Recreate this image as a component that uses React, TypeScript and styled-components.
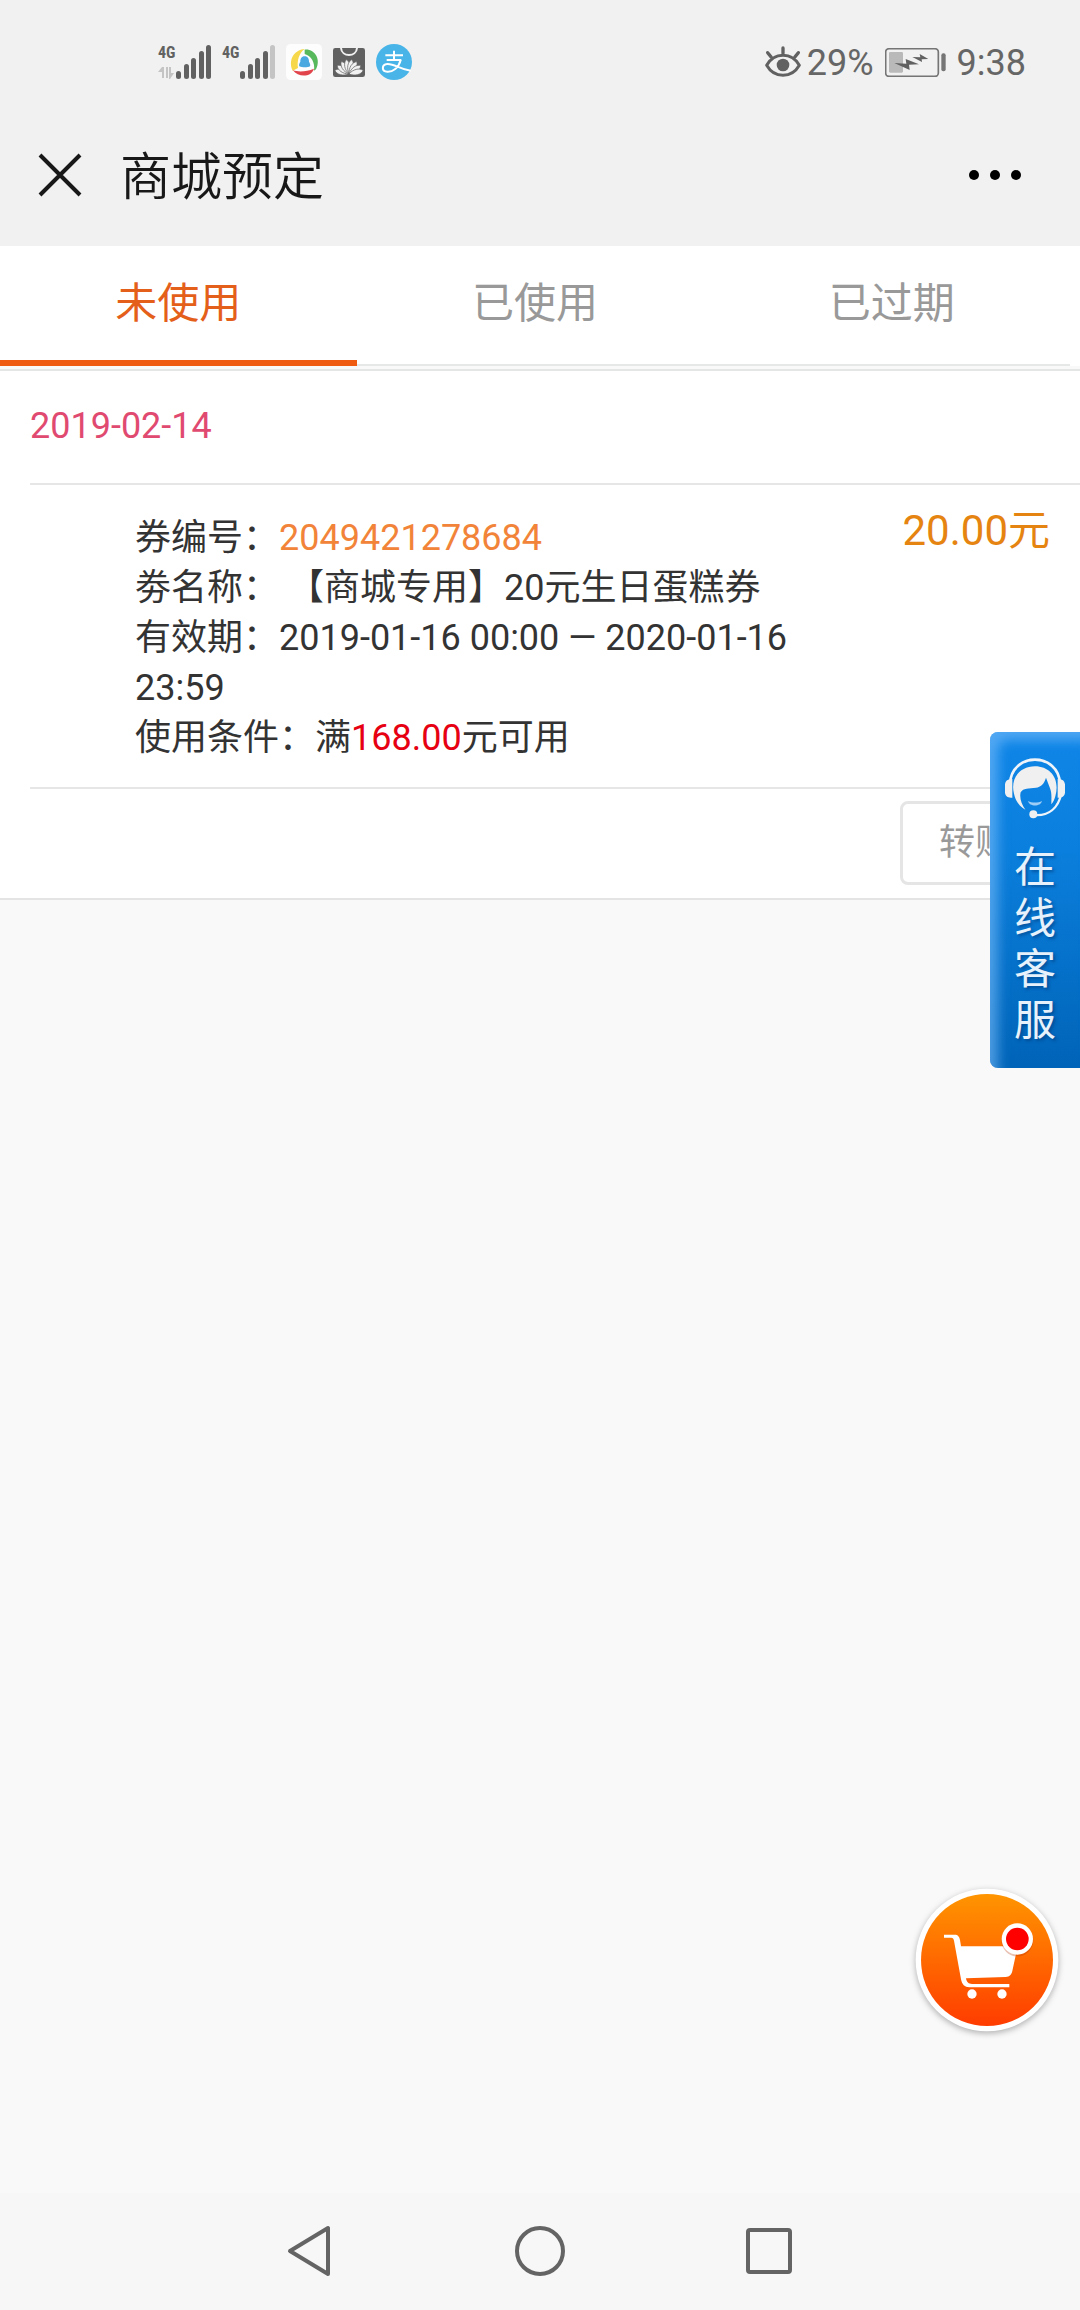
import React, { useState } from "react";
import styled, { createGlobalStyle } from "styled-components";

const GlobalStyle = createGlobalStyle`
  *, *::before, *::after { box-sizing: border-box; }
  body {
    margin: 0;
    background: #f9f9f9;
    color: #333;
    font-family: Roboto, "Noto Sans CJK SC", sans-serif;
    font-size: 36px;
    line-height: 50px;
  }
  button {
    margin: 0;
    padding: 0;
    border: 0;
    background: none;
    color: inherit;
    font: inherit;
    cursor: pointer;
  }
  svg { display: block; flex: none; }
`;

const Screen = styled.div`
  position: relative;
  display: flex;
  flex-direction: column;
  min-height: 100vh;
`;

const TopArea = styled.header`
  background: #f1f1f1;
`;

const StatusBar = styled.div`
  display: flex;
  align-items: center;
  justify-content: space-between;
  height: 106px;
  padding: 18px 54px 0 158px;
  color: #666;
`;

const StatusGroup = styled.div<{ $gap: number }>`
  display: flex;
  align-items: center;
  gap: ${(p) => p.$gap}px;
`;

const StatusText = styled.span`
  padding-top: 2px;
`;

const SignalBox = styled.div`
  display: grid;
  width: 53px;
  height: 34px;
  & > * { grid-area: 1 / 1; }
`;

const SignalLabel = styled.span`
  color: #616161;
  font-family: "Roboto Condensed", Roboto, sans-serif;
  font-size: 16px;
  font-weight: 700;
  line-height: 16px;
`;

const TitleBar = styled.div`
  display: flex;
  align-items: center;
  height: 140px;
  padding: 0 58px 2px 38px;
`;

const Title = styled.h1`
  flex: 1;
  margin: 0 0 0 38px;
  padding-top: 6px;
  color: #181818;
  font-size: 51px;
  font-weight: 350;
  line-height: 72px;
`;

const Tabs = styled.div`
  display: flex;
  padding-right: 10px;
  background: #fff;
`;

const Tab = styled.button<{ $active: boolean }>`
  flex: 1;
  height: 120px;
  padding-top: 2px;
  padding-bottom: ${(p) => (p.$active ? 0 : 4)}px;
  border-bottom: ${(p) => (p.$active ? "6px solid #ef5b10" : "2px solid #e6e8e8")};
  color: ${(p) => (p.$active ? "#e4601a" : "#999")};
  font-size: 42px;
`;

const List = styled.main`
  margin-top: 3px;
  padding-left: 30px;
  border-top: 2px solid #e4e6e6;
  border-bottom: 2px solid #e4e4e4;
  background: #fff;
`;

const DateRow = styled.div`
  padding: 30px 0 32px;
  border-bottom: 2px solid #e6e6e6;
  color: #e14a70;
`;

const Coupon = styled.section`
  display: flex;
  align-items: flex-start;
  gap: 30px;
  padding: 21px 30px 24px 105px;
  border-bottom: 2px solid #e6e6e6;
`;

const Info = styled.div`
  flex: 1;
  padding-top: 7px;
`;

const Line = styled.p`
  margin: 0;
`;

const Code = styled.span`
  color: #f2843a;
`;

const Amount = styled.span`
  color: #e60012;
`;

const Price = styled.strong`
  color: #e58410;
  font-size: 42px;
  font-weight: 400;
`;

const Actions = styled.div`
  display: flex;
  justify-content: flex-end;
  padding: 12px 30px 13px;
`;

const OutlineButton = styled.button`
  height: 84px;
  padding: 0 36px;
  border: 3px solid #e5e5e5;
  border-radius: 8px;
  color: #999;
`;

const Service = styled.button`
  position: absolute;
  top: 732px;
  right: 0;
  display: flex;
  flex-direction: column;
  align-items: center;
  gap: 21px;
  width: 90px;
  height: 336px;
  padding-top: 25px;
  border-radius: 8px 0 0 8px;
  background: linear-gradient(#0f86e8, #0b7fdd 35%, #0064b8);
  box-shadow: inset 10px 10px 12px -2px rgba(125, 190, 250, 0.6);
  color: #e6f1fb;
`;

const ServiceLabel = styled.span`
  width: 42px;
  font-size: 42px;
  line-height: 51px;
  word-break: break-all;
  text-shadow: 2px 2px 3px rgba(0, 50, 110, 0.5);
`;

const Cart = styled.button`
  position: absolute;
  right: 20px;
  bottom: 277px;
  border-radius: 50%;
  filter: drop-shadow(0 2px 3px rgba(0, 0, 0, 0.3));
`;

const NavBar = styled.nav`
  display: flex;
  align-items: center;
  justify-content: center;
  gap: 179px;
  height: 117px;
  margin-top: auto;
  padding-bottom: 2px;
  background: #f7f7f7;
`;

const BARS = [
  [18, 26],
  [26, 19],
  [33, 13],
  [41, 6],
  [48, 0],
];

function Signal({ full }: { full: boolean }) {
  return (
    <SignalBox>
      <SignalLabel>4G</SignalLabel>
      <svg width="53" height="34" viewBox="0 0 53 34" aria-hidden="true">
        {BARS.map(([x, y], i) => (
          <rect key={x} x={x} y={y} width="5" height={34 - y} rx="2.5" fill={i === 4 && !full ? "#c4c4c4" : "#616161"} />
        ))}
        {full && (
          <path d="M0 27l4-5h2v11H4v-6zM8 22h2v11H8zM11 22h2v6h3l-4 6h-1z" fill="#c4c4c4" />
        )}
      </svg>
    </SignalBox>
  );
}

function BrowserIcon() {
  return (
    <svg width="36" height="36" viewBox="0 0 108 108" aria-hidden="true">
      <rect width="108" height="108" rx="14" fill="#fdfdfd" />
      <path d="M20 80C6 50 22 18 56 15 40 26 32 50 36 72z" fill="#f6d84a" />
      <path d="M56 17C86 14 106 46 90 76L84 80C88 56 76 36 56 30z" fill="#58b85c" />
      <path d="M84 74C76 100 38 102 20 78 40 86 62 82 84 74z" fill="#e2444c" />
      <path d="M56 37c-10 0-13 8-13 16-3 5-5 10-3 14 8 4 26 4 32 0 2-4 0-9-3-14 0-8-3-16-13-16z" fill="#4aa8e0" />
    </svg>
  );
}

function StoreIcon() {
  const petals = [-76, -54, -32, -11, 11, 32, 54, 76];
  return (
    <svg width="32" height="29" viewBox="0 0 96 87" aria-hidden="true">
      <rect width="96" height="87" rx="7" fill="#616161" />
      <path d="M24 0c2 28 46 28 48 0" fill="none" stroke="#f1f1f1" strokeWidth="6" />
      {petals.map((a) => (
        <path
          key={a}
          d="M48 78c-11-16-11-34 0-44 11 10 11 28 0 44z"
          fill="#f1f1f1"
          stroke="#616161"
          strokeWidth="2"
          transform={`rotate(${a} 48 78)`}
        />
      ))}
    </svg>
  );
}

function PayIcon() {
  return (
    <svg width="36" height="36" viewBox="0 0 108 108" aria-hidden="true">
      <circle cx="54" cy="54" r="54" fill="#48b4e8" />
      <g fill="none" stroke="#fff" strokeWidth="6">
        <path d="M28 34h53M54 20v28M32 48h44" />
        <path d="M74 48C68 72 50 84 34 83 16 82 16 62 34 60c22-1 36 16 70 20" />
      </g>
    </svg>
  );
}

function EyeIcon() {
  return (
    <svg width="36" height="32" viewBox="0 0 108 96" aria-hidden="true">
      <g fill="none" stroke="#616161" strokeLinecap="round">
        <path d="M5 58C28 18 80 18 103 58 80 98 28 98 5 58z" strokeWidth="9" strokeLinejoin="round" />
        <path d="M54 6v16M8 20l11 14M100 20L89 34" strokeWidth="10" />
      </g>
      <circle cx="54" cy="57" r="19" fill="#616161" />
    </svg>
  );
}

function BatteryIcon() {
  return (
    <svg width="61" height="29" viewBox="0 0 183 87" aria-hidden="true">
      <rect x="2" y="2" width="158" height="83" rx="10" fill="none" stroke="#757575" strokeWidth="5" />
      <rect x="12" y="12" width="42" height="62" rx="4" fill="#b9b9b9" />
      <path d="M28 45l36 2-2-14 40 16-30 1 2 16z M82 27l24 1-2-10 26 15-20 1 1 8z" fill="#616161" />
      <rect x="169" y="16" width="13" height="54" rx="6" fill="#757575" />
    </svg>
  );
}

function HeadsetIcon() {
  return (
    <svg width="64" height="64" viewBox="99 142 192 192" aria-hidden="true">
      <g fill="none" stroke="#eef4fa">
        <path d="M120 222C124 126 266 126 270 222" strokeWidth="8" />
        <path d="M274 252C264 296 236 318 196 316" strokeWidth="7" />
      </g>
      <path
        d="M166 300C148 290 136 272 132 252 120 206 150 170 195 170c46 0 76 38 61 90-2 8-6 18-12 24 0-18 2-34-4-48l-12-32c-6 20-16 28-30 30-22 3-38 0-46 14-4 16 2 36 14 52z"
        fill="#f0f0f0"
      />
      <path d="M105 224c2-14 12-16 22-16v56c-12 2-22-4-22-16zM285 224c-2-14-12-16-22-16v56c12 2 22-4 22-16z" fill="#f0f0f0" />
      <path d="M174 274c12 6 30 6 42 0-4 18-38 18-42 0z" fill="#9fcdf5" />
      <circle cx="190" cy="314" r="12" fill="#f0f0f0" />
    </svg>
  );
}

function CartIcon() {
  return (
    <svg width="146" height="146" viewBox="42 52 438 438" aria-hidden="true">
      <defs>
        <linearGradient id="cartFill" x1="0" y1="0" x2="0" y2="1">
          <stop offset="0" stopColor="#ff9500" />
          <stop offset="1" stopColor="#ff3c00" />
        </linearGradient>
      </defs>
      <circle cx="261" cy="271" r="214" fill="#fff" />
      <circle cx="261" cy="271" r="198" fill="url(#cartFill)" />
      <path d="M132 195h32c10 0 14 6 16 16l3 19h170l-16 74c-3 12-8 17-20 18l-119 4c2 12 8 17 18 17h112v10H208c-14 0-22-8-25-24l-21-116c-1-6-3-9-9-9h-21z" fill="#fff" />
      <circle cx="216" cy="373" r="14" fill="#fff" />
      <circle cx="306" cy="373" r="14" fill="#fff" />
      <circle cx="352" cy="212" r="48" fill="#b43200" opacity="0.3" />
      <circle cx="352" cy="208" r="47" fill="#fff" />
      <circle cx="352" cy="208" r="34" fill="#f00" />
    </svg>
  );
}

const TABS = ["未使用", "已使用", "已过期"];

export default function App() {
  const [active, setActive] = useState(0);
  return (
    <Screen lang="zh-CN">
      <GlobalStyle />
      <TopArea>
        <StatusBar>
          <StatusGroup $gap={11}>
            <Signal full />
            <Signal full={false} />
            <BrowserIcon />
            <StoreIcon />
            <PayIcon />
          </StatusGroup>
          <StatusGroup $gap={11}>
            <StatusGroup $gap={6}>
              <EyeIcon />
              <StatusText>29%</StatusText>
            </StatusGroup>
            <BatteryIcon />
            <StatusText>9:38</StatusText>
          </StatusGroup>
        </StatusBar>
        <TitleBar>
          <button aria-label="关闭">
            <svg width="44" height="44" viewBox="0 0 44 44" fill="none" stroke="#181818" strokeWidth="4">
              <path d="M2 2l40 40M42 2L2 42" />
            </svg>
          </button>
          <Title>商城预定</Title>
          <button aria-label="更多">
            <svg width="54" height="44" viewBox="0 0 54 44">
              <circle cx="6" cy="22" r="5" />
              <circle cx="27" cy="22" r="5" />
              <circle cx="48" cy="22" r="5" />
            </svg>
          </button>
        </TitleBar>
      </TopArea>

      <Tabs role="tablist">
        {TABS.map((label, i) => (
          <Tab key={label} role="tab" aria-selected={i === active} $active={i === active} onClick={() => setActive(i)}>
            {label}
          </Tab>
        ))}
      </Tabs>

      <List>
        <DateRow>2019-02-14</DateRow>
        <Coupon>
          <Info>
            <Line>券编号：<Code>2049421278684</Code></Line>
            <Line>劵名称： 【商城专用】20元生日蛋糕券</Line>
            <Line>有效期：2019-01-16 00:00 — 2020-01-16 23:59</Line>
            <Line>使用条件：满<Amount>168.00</Amount>元可用</Line>
          </Info>
          <Price>20.00元</Price>
        </Coupon>
        <Actions>
          <OutlineButton>转赠</OutlineButton>
        </Actions>
      </List>

      <Service>
        <HeadsetIcon />
        <ServiceLabel>在线客服</ServiceLabel>
      </Service>

      <Cart aria-label="购物车">
        <CartIcon />
      </Cart>

      <NavBar>
        <button aria-label="返回">
          <svg width="50" height="52" viewBox="0 0 50 52" fill="none" stroke="#646464" strokeWidth="4" strokeLinejoin="round">
            <path d="M4 26L42 3v46z" />
          </svg>
        </button>
        <button aria-label="主页">
          <svg width="50" height="50" viewBox="0 0 50 50" fill="none" stroke="#646464" strokeWidth="4">
            <circle cx="25" cy="25" r="23" />
          </svg>
        </button>
        <button aria-label="最近任务">
          <svg width="50" height="50" viewBox="0 0 50 50" fill="none" stroke="#646464" strokeWidth="4">
            <rect x="4" y="4" width="42" height="42" rx="2" />
          </svg>
        </button>
      </NavBar>
    </Screen>
  );
}
